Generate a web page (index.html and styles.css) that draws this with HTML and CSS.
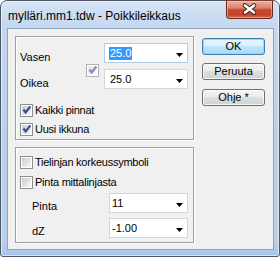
FILE: index.html
```html
<!DOCTYPE html>
<html>
<head>
<meta charset="utf-8">
<link rel="stylesheet" href="styles.css">
</head>
<body>
<svg class="defs" width="0" height="0">
  <defs>
    <linearGradient id="cbg" x1="0" y1="0" x2="1" y2="1">
      <stop offset="0" stop-color="#c9cdd3"/>
      <stop offset="1" stop-color="#f6f6f6"/>
    </linearGradient>
    <linearGradient id="cbgd" x1="0" y1="0" x2="1" y2="1">
      <stop offset="0" stop-color="#e4e6e9"/>
      <stop offset="1" stop-color="#fafafa"/>
    </linearGradient>
    <linearGradient id="closeg" x1="0" y1="0" x2="0" y2="1">
      <stop offset="0" stop-color="#e9a99a"/>
      <stop offset="0.45" stop-color="#d8755f"/>
      <stop offset="0.5" stop-color="#c94a2f"/>
      <stop offset="1" stop-color="#c0452c"/>
    </linearGradient>
  </defs>
</svg>
<div class="window">
  <div class="titlebar">
    <span class="title">mylläri.mm1.tdw - Poikkileikkaus</span>
    <div class="close">
      <svg width="47" height="18" viewBox="0 0 47 18">
        <path d="M19 5.5 L28 12.5 M28 5.5 L19 12.5" stroke="#3b2520" stroke-width="4.6" stroke-linecap="round" fill="none"/>
        <path d="M19 5.5 L28 12.5 M28 5.5 L19 12.5" stroke="#ffffff" stroke-width="2.6" stroke-linecap="round" fill="none"/>
      </svg>
    </div>
  </div>
  <div class="client">
    <div class="left">
      <div class="group g1">
        <div class="lr">
          <div class="lbl lbl-a">Vasen</div>
          <svg class="cb link" viewBox="0 0 13 13">
            <rect x="0.5" y="0.5" width="12" height="12" fill="#fff" stroke="#b1b1b1"/>
            <rect x="2" y="2" width="9" height="9" fill="url(#cbgd)"/>
            <path d="M2.5 6.2 L4.2 4.8 L5.6 6.6 L9.6 1.8 L11.2 3.3 L5.6 10.2 Z" fill="#8190b6"/>
          </svg>
          <div class="combo c1"><span class="val"><span class="sel">25.0</span></span><svg class="arrow" viewBox="0 0 7 4"><path d="M0 0 H7 L3.5 4 Z" fill="#000"/></svg></div>
          <div class="lbl lbl-b">Oikea</div>
          <div class="combo c2"><span class="val"><span class="pad">25.0</span></span><svg class="arrow" viewBox="0 0 7 4"><path d="M0 0 H7 L3.5 4 Z" fill="#000"/></svg></div>
        </div>
        <div class="chk-row r1">
          <svg class="cb" viewBox="0 0 13 13">
            <rect x="0.5" y="0.5" width="12" height="12" fill="#fff" stroke="#8e8f8f"/>
            <rect x="2" y="2" width="9" height="9" fill="url(#cbg)"/>
            <path d="M2.5 6.2 L4.2 4.8 L5.6 6.6 L9.6 1.8 L11.2 3.3 L5.6 10.2 Z" fill="#3d5191"/>
          </svg>
          <span class="txt">Kaikki pinnat</span>
        </div>
        <div class="chk-row r2">
          <svg class="cb" viewBox="0 0 13 13">
            <rect x="0.5" y="0.5" width="12" height="12" fill="#fff" stroke="#8e8f8f"/>
            <rect x="2" y="2" width="9" height="9" fill="url(#cbg)"/>
            <path d="M2.5 6.2 L4.2 4.8 L5.6 6.6 L9.6 1.8 L11.2 3.3 L5.6 10.2 Z" fill="#3d5191"/>
          </svg>
          <span class="txt">Uusi ikkuna</span>
        </div>
      </div>
      <div class="group g2">
        <div class="chk-row">
          <svg class="cb" viewBox="0 0 13 13">
            <rect x="0.5" y="0.5" width="12" height="12" fill="#fff" stroke="#8e8f8f"/>
            <rect x="2" y="2" width="9" height="9" fill="url(#cbg)"/>
          </svg>
          <span class="txt">Tielinjan korkeussymboli</span>
        </div>
        <div class="chk-row r3">
          <svg class="cb" viewBox="0 0 13 13">
            <rect x="0.5" y="0.5" width="12" height="12" fill="#fff" stroke="#8e8f8f"/>
            <rect x="2" y="2" width="9" height="9" fill="url(#cbg)"/>
          </svg>
          <span class="txt">Pinta mittalinjasta</span>
        </div>
        <div class="pz">
          <div class="lbl lbl-c">Pinta</div>
          <div class="combo c3"><span class="val">11</span><svg class="arrow" viewBox="0 0 7 4"><path d="M0 0 H7 L3.5 4 Z" fill="#000"/></svg></div>
          <div class="lbl lbl-c">dZ</div>
          <div class="combo c3"><span class="val">-1.00</span><svg class="arrow" viewBox="0 0 7 4"><path d="M0 0 H7 L3.5 4 Z" fill="#000"/></svg></div>
        </div>
      </div>
    </div>
    <div class="buttons">
      <div class="btn def">OK</div>
      <div class="btn">Peruuta</div>
      <div class="btn help">Ohje *</div>
    </div>
  </div>
</div>
</body>
</html>
```
FILE: styles.css
```css
html, body {
  margin: 0;
  padding: 0;
  background: #ffffff;
}

body {
  font-family: "Liberation Sans", Arial, sans-serif;
}

.defs {
  position: absolute;
  width: 0;
  height: 0;
}

.window {
  position: relative;
  width: 280px;
  height: 257px;
  box-sizing: border-box;
  border: 1px solid #4d5867;
  border-radius: 7px 7px 3px 3px;
  background: linear-gradient(to bottom, #d6e4f5 0px, #c3d7ef 28px, #bcd2ec 120px, #b9d0eb 240px, #abc8ea 252px, #9fbfe6 256px);
  box-shadow: inset 0 0 0 1px rgba(255, 255, 255, 0.55);
  display: flex;
  flex-direction: column;
}

.titlebar {
  position: relative;
  height: 27px;
  flex: none;
}

.title {
  display: block;
  padding: 8px 0 0 7px;
  font-size: 12px;
  line-height: 14px;
  color: #000;
  white-space: nowrap;
}

.close {
  position: absolute;
  top: -1px;
  left: 225px;
  width: 47px;
  height: 19px;
  box-sizing: border-box;
  border: 1px solid #6b2b22;
  border-top-color: #7d3a30;
  border-radius: 0 0 4px 4px;
  background: linear-gradient(to bottom, #eab0a2 0%, #dc8470 40%, #c9492e 52%, #c24328 80%, #d06a4f 100%);
  box-shadow: inset 0 0 0 1px rgba(255, 220, 210, 0.45);
  overflow: hidden;
}

.close svg {
  display: block;
  margin: -1px 0 0 -1px;
}

.client {
  flex: 1;
  margin: 0 5px 6px 6px;
  border: 1px solid #8ea3be;
  background: #f0f0f0;
  box-sizing: border-box;
  display: flex;
  gap: 8px;
  padding: 7px 8px 6px 7px;
  font-size: 11px;
  line-height: 13px;
  color: #000;
}

.left {
  width: 179px;
  flex: none;
  display: flex;
  flex-direction: column;
  gap: 7px;
}

.group {
  box-sizing: border-box;
  border: 1px solid #a0a0a0;
  box-shadow: inset 1px 1px 0 #ffffff, 1px 1px 0 #ffffff;
  padding: 0 4px;
}

.g1 {
  height: 104px;
  padding-top: 6px;
}

.g2 {
  height: 96px;
  padding-top: 8px;
}

.lr {
  display: grid;
  grid-template-columns: 66px 18px 84px;
  grid-template-rows: 20px 20px;
  row-gap: 6px;
}

.lbl {
  padding-top: 8px;
  white-space: nowrap;
}

.lbl-a {
  grid-column: 1;
  grid-row: 1;
}

.lbl-b {
  grid-column: 1;
  grid-row: 2;
}

.cb {
  display: block;
  width: 13px;
  height: 13px;
  flex: none;
}

.cb.link {
  grid-column: 2;
  grid-row: 1 / span 2;
  margin-top: 21px;
}

.combo {
  box-sizing: border-box;
  height: 20px;
  border: 1px solid #d6d6d6;
  background: #ffffff;
  display: flex;
  align-items: center;
  padding: 0 4px 0 4px;
  white-space: nowrap;
}

.c1 {
  grid-column: 3;
  grid-row: 1;
  border-color: #b3cce6;
}

.c2 {
  grid-column: 3;
  grid-row: 2;
}

.c3 {
  padding-left: 2px;
}

.val {
  flex: 1;
}

.sel {
  display: inline-block;
  padding: 0 1px;
  background: #3399ff;
  color: #ffffff;
}

.pad {
  display: inline-block;
  padding: 0 1px;
}

.arrow {
  display: block;
  width: 7px;
  height: 4px;
  flex: none;
  margin-top: 3px;
}

.chk-row {
  display: flex;
  align-items: flex-start;
  height: 13px;
  white-space: nowrap;
}

.chk-row .txt {
  margin-left: 2px;
  letter-spacing: -0.25px;
}

.r1 {
  margin-top: 15px;
}

.r2 {
  margin-top: 6px;
}

.r3 {
  margin-top: 7px;
}

.pz {
  margin-top: 4px;
  display: grid;
  grid-template-columns: 89px 79px;
  grid-template-rows: 20px 20px;
  row-gap: 5px;
}

.lbl-c {
  padding-top: 7px;
  padding-left: 12px;
}

.buttons {
  width: 63px;
  flex: none;
  display: flex;
  flex-direction: column;
  gap: 8px;
  padding-top: 2px;
}

.btn {
  height: 17px;
  box-sizing: border-box;
  border: 1px solid #707070;
  border-radius: 3px;
  background: linear-gradient(to bottom, #f4f4f4 0%, #ececec 45%, #dedede 50%, #d2d2d2 100%);
  box-shadow: inset 0 0 0 1px rgba(255, 255, 255, 0.75);
  display: flex;
  align-items: center;
  justify-content: center;
  line-height: 13px;
}

.btn.def {
  border-color: #3c7fb1;
  background: linear-gradient(to bottom, #eaf6fd 0%, #d9f0fc 45%, #bee6fd 50%, #a7d9f5 100%);
  box-shadow: inset 0 0 0 1px #8fdcf9;
}

.btn.help {
  margin-top: 1px;
}
```
